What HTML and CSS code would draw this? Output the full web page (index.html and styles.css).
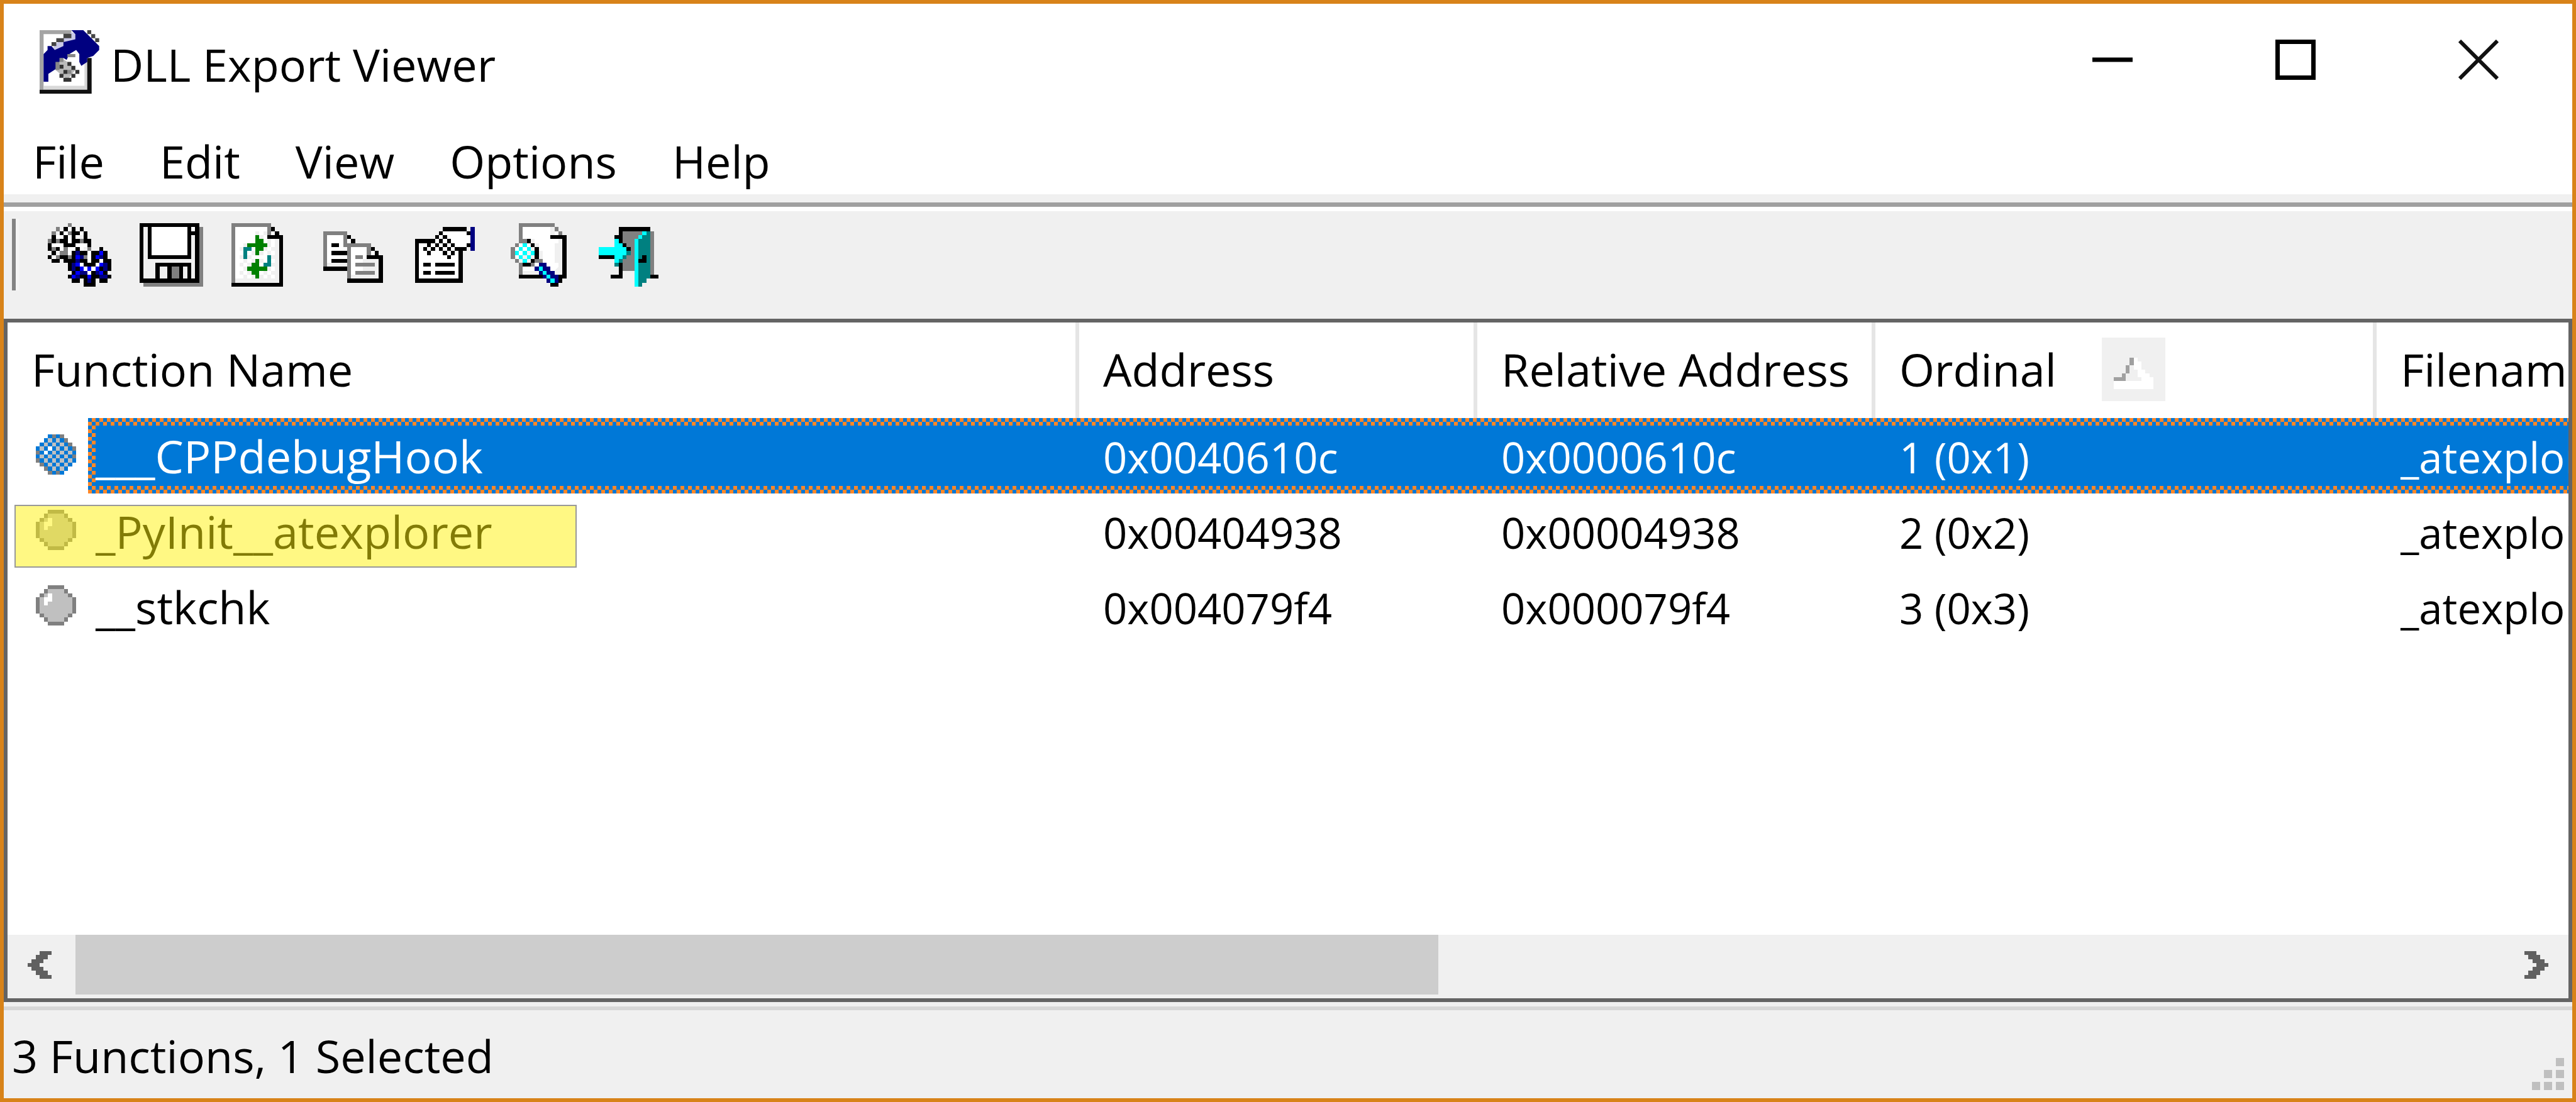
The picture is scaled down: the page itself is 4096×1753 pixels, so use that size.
FILE: index.html
```html
<!DOCTYPE html>
<html lang="en">
<head>
<meta charset="utf-8">
<title>DLL Export Viewer</title>
<link rel="stylesheet" href="styles.css">
</head>
<body>
<div class="window">
  <header class="titlebar">
    <svg class="icon" viewBox="0 0 16 16" aria-hidden="true">
      <path fill="#fff" d="M0 0h13v16H0z"/>
      <path fill="#a4a4a4" d="M0 0h8v1H1V15H0z"/>
      <path fill="#d8d8d8" d="M1 14h11v1H1zM11.300 8h.8v7h-.8z"/>
      <path fill="#111" d="M0 15h13v1H0zM12 7h1.100v9H12z"/>
      <path fill="#c9c9e8" d="M4 3.500l3-2 1-1 2 .5v1.500L5 5 3 5z"/>
      <path fill="#000080" d="M8 0h3l1 1 3 3v1l-1.500 1.500L12 7v1l-1.500 1L10 8V6l-.8-1-1.700 1-.7 1.500L6 7 4.500 8.500v1L2.200 11v2H1V6l1-1V4h1l.8 1L6 4V3l3-.7V1z"/>
      <path fill="#444" d="M3 3h1.200v1H3zM4.200 2h1.900v1H4.200zM6 .9h2V2H6zM12 0h1v1h-1zM13 1h1v1h-1zM14 2h1v1h-1z"/>
      <path fill="#bbb" d="M5.500 7L7 8l2 2-2 2.500L4 10z"/>
      <path fill="#333" d="M5 8.700h1v1H5zM6 10h1v1H6zM5 11h1v1H5zM6 12h2v1H6zM8 11h1v1H8zM9 10h1v1H9zM8 9h1v1H8zM7 8h1v1H7z"/>
      <path fill="#888" d="M5 7h1v1H5zM4 8h1v2H4zM7 10h1v1H7zM7 6h2v.8H7z"/>
    </svg>
    <h1 class="title">DLL Export Viewer</h1>
    <div class="window-controls">
      <button class="control" type="button" aria-label="Minimize"><svg viewBox="0 0 64 64"><path d="M0 32h64" stroke="#000" stroke-width="7"/></svg></button>
      <button class="control" type="button" aria-label="Maximize"><svg viewBox="0 0 64 64"><path d="M3.500 3.500h57v57h-57z" fill="none" stroke="#000" stroke-width="7"/></svg></button>
      <button class="control" type="button" aria-label="Close"><svg viewBox="0 0 64 64"><path d="M2 2l60 60M62 2L2 62" fill="none" stroke="#111" stroke-width="6"/></svg></button>
    </div>
  </header>

  <nav class="menubar" aria-label="Menu">
    <button type="button">File</button>
    <button type="button">Edit</button>
    <button type="button">View</button>
    <button type="button">Options</button>
    <button type="button">Help</button>
  </nav>

  <div class="toolbar" role="toolbar" aria-label="Tools">
    <span class="gripper"></span>
    <button type="button" aria-label="Select DLL files">
      <svg class="icon pixel" viewBox="0 0 16 16"><g transform="translate(0 .5)">
        <path stroke="#fff" d="M5 1h1M4 2h1M8 2h1M2 3h2M5 3h1M7 3h1M5 4h1M1 5h3M7 5h3M3 6h1M5 6h2M8 6h1M5 7h1M10 7h1M1 8h1M10 8h1M10 9h1M13 9h1M8 10h1M12 10h1M9 11h1M11 11h1M10 12h1"/>
        <path stroke="#808080" d="M5 0h1M2 1h1M1 2h1M5 2h1M0 4h1M2 4h1M8 4h1M1 6h1M4 6h1M10 6h1M3 7h2M2 8h1M5 8h1M9 8h1"/>
        <path stroke="#000" d="M4 1h1M6 1h1M8 1h1M3 2h1M6 2h2M9 2h1M1 3h1M4 3h1M6 3h1M9 3h1M1 4h1M3 4h2M6 4h2M9 4h2M0 5h1M4 5h3M10 5h1M0 6h1M2 6h1M7 6h1M13 6h1M1 7h1M6 7h1M8 7h2M11 7h2M14 7h1M0 8h1M3 8h2M6 8h1M11 8h1M14 8h1M1 9h2M4 9h3M8 9h2M11 9h2M14 9h2M5 10h1M9 10h3M15 10h1M5 11h1M7 11h1M13 11h1M15 11h1M6 12h1M11 12h1M14 12h1M5 13h1M8 13h2M11 13h2M15 13h1M6 14h2M9 14h1M11 14h1M13 14h2M9 15h3"/>
        <path stroke="#000080" d="M7 7h1M8 8h1M13 8h1M7 9h1M6 10h1M14 10h1M6 11h1M14 11h1M8 12h2M12 12h1M7 13h1M13 13h2M10 14h1"/>
        <path stroke="#00f" d="M13 7h1M7 8h1M12 8h1M7 10h1M13 10h1M8 11h1M10 11h1M12 11h1M7 12h1M13 12h1M6 13h1M10 13h1"/>
      </g></svg>
    </button>
    <button type="button" aria-label="Save">
      <svg class="icon pixel" viewBox="0 0 16 16">
        <path fill="#808080" d="M1 1h15v15H1z"/>
        <path fill="#000" d="M0 0h15v15H0z"/>
        <path fill="#f0f0f0" d="M1 1h1v8h11V3h1v11h-1v-4H4v4H1zM5 11h2v3H5zM11 11h1v3h-1z"/>
        <path fill="#fff" d="M3 1h9v7H3zM13 1h1v1h-1z"/>
        <path fill="#808080" d="M8 11h2v3H8z"/>
      </svg>
    </button>
    <button type="button" aria-label="Refresh">
      <svg class="icon pixel" viewBox="0 0 16 16"><g transform="translate(0 .5)">
        <path fill="#fff" d="M1 .5h8v3h2v10H1z"/>
        <path stroke="#fff" d="M10 2h1"/>
        <path stroke="#f0f0f0" d="M6 2h1M8 2h1M7 3h1M9 4h1M3 5h1M9 5h1M2 6h1M8 6h1M10 6h1M5 7h1M7 7h1M9 7h1M2 8h1M4 8h1M10 8h1M3 9h1M5 9h1M7 9h1M2 10h1M4 10h1M10 10h1M3 11h1M9 11h1M2 12h1M4 12h1M8 12h1M10 12h1M3 13h1M5 13h1M7 13h1M9 13h1"/>
        <path stroke="#808080" d="M0 0h10M0 1h1M9 1h1M0 2h1M9 2h1"/>
        <path fill="#808080" d="M0 2h1v12.500H0z"/>
        <path fill="#000" d="M10 .5h1v1h-1zM11 1.500h1v1h-1zM9 2.500h4v13H0v-1h12v-11H9z"/>
        <path stroke="green" d="M6 3h1M6 4h2M4 5h5M6 6h2M6 7h1M6 9h1M5 10h2M4 11h5M5 12h2M6 13h1"/>
        <path stroke="teal" d="M3 6h2M3 7h1M3 8h1M9 8h1M9 9h1M8 10h2"/>
      </g></svg>
    </button>
    <button type="button" aria-label="Copy">
      <svg class="icon pixel" viewBox="0 0 16 16">
        <path fill="#fff" d="M1 3h4v3h1v4H1zM6 4h1v1H6zM7 6h4v3h-1v4H7zM12 7h1v1h-1z"/>
        <path fill="#808080" d="M0 2h6v3h6v3h-1V6H7v8H6V6H5V3H1v8H0zM8 8h2v1H8zM8 10h5v1H8zM8 12h5v1H8z"/>
        <path fill="#000" d="M6 3h1v1H6zM7 4h1v1H7zM0 11h6v1H0zM2 5h2v1H2zM2 7h4v1H2zM2 9h4v1H2zM12 6h1v1h-1zM13 7h1v1h-1zM11 8h4v7H6v-1h8V9h-3z"/>
      </svg>
    </button>
    <button type="button" aria-label="Properties">
      <svg class="icon pixel" viewBox="0 0 16 16"><g transform="translate(0 .5)">
        <path fill="#fff" d="M1 4.500h4v-2h2v-1h7v4h-3v8H1z"/>
        <path fill="#000" d="M0 3.500h5v1H1v9h10v-8h1v9H0z"/>
        <path stroke="#000" d="M7 1h6M6 2h1M13 2h1M5 3h1M7 3h1M6 4h1M8 4h1M3 5h1M5 5h1M7 5h1M9 5h1M13 5h1M2 6h1M4 6h1M6 6h1M8 6h1M10 6h3M3 7h1M7 7h1M9 7h1M8 8h1M2 10h2M5 10h5M2 12h2M5 12h5"/>
        <path fill="#000080" d="M14 .5h1v6h-1z"/>
      </g></svg>
    </button>
    <button type="button" aria-label="Find">
      <svg class="icon pixel" viewBox="-1 0 16 16"><g transform="translate(0 .5)">
        <path fill="#fff" d="M3 .5h7v3h2v7l-1 1h-8zM2 4.500h3l1 2v2l-1 1H2l-1-2v-2zM11 1.500h1v1h-1z"/>
        <path fill="#f0f0f0" d="M10 .5h1v2h-1zM11 4.500h1v5h-1zM5 3.500h1v1h1v2h1v2H7v-3H6v-1H5z"/>
        <path stroke="#f0f0f0" d="M4 7h1M3 8h1M5 8h1M4 9h1M2 9h1M5 6h1"/>
        <path stroke="#808080" d="M2 0h9M2 1h1M11 1h1M2 2h1M12 2h1M2 3h1M2 4h2M1 5h1M0 6h1M0 7h1M0 8h1M1 9h1M6 9h2M2 10h1M5 10h1M2 11h1M2 12h1"/>
        <path fill="#000" d="M10 2.500h4v11H2v-1h11v-9h-3z"/>
        <path stroke="#000" d="M4 4h1M5 5h1M6 6h1M6 7h1M6 8h1M5 9h1M3 10h2M12 14h1M10 15h2"/>
        <path stroke="#0ff" d="M3 5h1M2 6h1M4 6h1M1 7h1M3 7h1M5 7h1M2 8h1M4 8h1M3 9h1"/>
        <path stroke="#000080" d="M7 10h2M6 11h4M7 12h4M8 13h4M9 14h3"/>
        <path stroke="#0ff" d="M7 11h1M8 12h1M9 13h1M10 14h1"/>
      </g></svg>
    </button>
    <button type="button" aria-label="Exit">
      <svg class="icon pixel" viewBox="0 0 16 16"><g transform="translate(0 .5)">
        <path fill="#808080" d="M6 1.500h8v11h-1v-11zM6 1.500h6v2l-3 1v7H6z"/>
        <path fill="#000" d="M5 .5h8v1H6v3H5z"/>
        <path stroke="#000" d="M4 3h1M6 5h1M7 6h1M0 8h4M5 10h1M5 11h1M5 12h1M3 13h3M13 13h2"/>
        <path stroke="#0ff" d="M4 4h1M4 5h2M0 6h7M0 7h7M4 8h2M4 9h1M11 2h1M10 3h1"/>
        <path stroke="teal" d="M7 7h1M6 8h1M5 9h1M4 10h1M12 2h1M11 3h2M10 14h2M10 15h1"/>
        <path fill="#0ff" d="M9 3.500h1v12H9z"/>
        <path fill="teal" d="M10 3.500h3v10h-3z"/>
        <path stroke="#000" d="M11 8h1M10 9h2"/>
      </g></svg>
    </button>
  </div>

  <main class="list">
    <div class="list-body">
      <table>
        <colgroup>
          <col class="col-name"><col class="col-address"><col class="col-relative"><col class="col-ordinal"><col class="col-file">
        </colgroup>
        <thead>
          <tr>
            <th scope="col">Function Name</th>
            <th scope="col">Address</th>
            <th scope="col">Relative Address</th>
            <th scope="col" aria-sort="ascending">
              <div class="sorted">Ordinal
                <svg class="icon pixel" viewBox="0 0 16 16" aria-hidden="true">
                  <path fill="#f0f0f0" d="M0 0h16v16H0z"/>
                  <path fill="#a0a0a0" d="M7 5h1v2H7zM6 7h1v2H6zM5 9h1v2H5zM3 10h2v1H3z"/>
                  <path fill="#fff" d="M8 5h1v3H8zM9 6h1v4H9zM10 8h1v3h-1zM11 9h1v2h-1zM12 10h1v1h-1zM3 11h10v2H3z"/>
                </svg>
              </div>
            </th>
            <th scope="col">Filename</th>
          </tr>
        </thead>
        <tbody>
          <tr class="selected">
            <td class="name"><div class="item">
              <span class="mark"><svg class="bullet pixel" viewBox="0 0 10 10" aria-hidden="true">
                <path fill="#c0c0c0" d="M3 0h4v1h1v1h1v1h1v4H9v1H8v1H7v1H3V9H2V8H1V7H0V3h1V2h1V1h1z"/>
                <path fill="#fff" d="M3 2h1v2H3zM2 3h1v2H2z"/>
                <g transform="translate(0 .5)">
                  <path stroke="#808080" d="M3 0h4M2 1h1M7 1h1M1 2h1M8 2h1M0 3h1M9 3h1M0 4h1M9 4h1M0 5h1M9 5h1M0 6h1M9 6h1M1 7h1M8 7h1M2 8h1M7 8h1M3 9h4"/>
                  <path stroke="#0078d7" d="M3 0h1M5 0h1M2 1h1M4 1h1M6 1h1M1 2h1M3 2h1M5 2h1M7 2h1M0 3h1M2 3h1M4 3h1M6 3h1M8 3h1M1 4h1M3 4h1M5 4h1M7 4h1M9 4h1M0 5h1M2 5h1M4 5h1M6 5h1M8 5h1M1 6h1M3 6h1M5 6h1M7 6h1M9 6h1M2 7h1M4 7h1M6 7h1M8 7h1M3 8h1M5 8h1M7 8h1M4 9h1M6 9h1"/>
                </g>
              </svg></span>
              <span class="label">___CPPdebugHook</span>
            </div></td>
            <td>0x0040610c</td>
            <td>0x0000610c</td>
            <td>1 (0x1)</td>
            <td>_atexplorer.pyd</td>
          </tr>
          <tr>
            <td class="name"><div class="item">
              <span class="mark"><svg class="bullet pixel" viewBox="0 0 10 10" aria-hidden="true">
                <path fill="#c0c0c0" d="M3 0h4v1h1v1h1v1h1v4H9v1H8v1H7v1H3V9H2V8H1V7H0V3h1V2h1V1h1z"/>
                <path fill="#fff" d="M3 2h1v2H3zM2 3h1v2H2z"/>
                <path stroke="#808080" transform="translate(0 .5)" d="M3 0h4M2 1h1M7 1h1M1 2h1M8 2h1M0 3h1M9 3h1M0 4h1M9 4h1M0 5h1M9 5h1M0 6h1M9 6h1M1 7h1M8 7h1M2 8h1M7 8h1M3 9h4"/>
              </svg></span>
              <span class="label">_PyInit__atexplorer</span>
              <span class="highlight"></span>
            </div></td>
            <td>0x00404938</td>
            <td>0x00004938</td>
            <td>2 (0x2)</td>
            <td>_atexplorer.pyd</td>
          </tr>
          <tr>
            <td class="name"><div class="item">
              <span class="mark"><svg class="bullet pixel" viewBox="0 0 10 10" aria-hidden="true">
                <path fill="#c0c0c0" d="M3 0h4v1h1v1h1v1h1v4H9v1H8v1H7v1H3V9H2V8H1V7H0V3h1V2h1V1h1z"/>
                <path fill="#fff" d="M3 2h1v2H3zM2 3h1v2H2z"/>
                <path stroke="#808080" transform="translate(0 .5)" d="M3 0h4M2 1h1M7 1h1M1 2h1M8 2h1M0 3h1M9 3h1M0 4h1M9 4h1M0 5h1M9 5h1M0 6h1M9 6h1M1 7h1M8 7h1M2 8h1M7 8h1M3 9h4"/>
              </svg></span>
              <span class="label">__stkchk</span>
            </div></td>
            <td>0x004079f4</td>
            <td>0x000079f4</td>
            <td>3 (0x3)</td>
            <td>_atexplorer.pyd</td>
          </tr>
        </tbody>
      </table>
    </div>
    <div class="scrollbar">
      <button class="scroll-left" type="button" aria-label="Scroll left"><svg class="arrow pixel" viewBox="0 0 6 7"><path fill="#606060" d="M3 0h3v1H5v1H4v1H3v1h1v1h1v1h1v1H3V6H2V5H1V4H0V3h1V2h1V1h1z"/></svg></button>
      <div class="track"><div class="thumb"></div></div>
      <button class="scroll-right" type="button" aria-label="Scroll right"><svg class="arrow pixel" viewBox="0 0 6 7"><path fill="#606060" d="M0 0h3v1h1v1h1v1h1v1H5v1H4v1H3v1H0V6h1V5h1V4h1V3H2V2H1V1H0z"/></svg></button>
    </div>
  </main>

  <footer class="statusbar">
    <span class="status">3 Functions, 1 Selected</span>
    <svg class="grip pixel" viewBox="0 0 8 8" aria-hidden="true"><path fill="#bfbfbf" d="M6 0h2v2H6zM3 3h2v2H3zM6 3h2v2H6zM0 6h2v2H0zM3 6h2v2H3zM6 6h2v2H6z"/></svg>
  </footer>
</div>
</body>
</html>
```
FILE: styles.css
```css
* {
  box-sizing: border-box;
}

body {
  margin: 0;
  font-family: "Open Sans", "Noto Sans", sans-serif;
  font-size: 72px;
  color: #000;
  --face: #f0f0f0;
  --blue: #0078d7;
  --checker: repeating-conic-gradient(#ff8728 0 25%, #0078d7 0 50%);
}

button {
  padding: 0;
  border: 0;
  background: none;
  font: inherit;
  color: inherit;
}

svg {
  display: block;
  flex: none;
}

.icon {
  width: 101px;
  height: 101px;
}

.pixel {
  shape-rendering: crispEdges;
}

.window {
  display: flex;
  flex-direction: column;
  min-height: 100vh;
  border: 6px solid #d88319;
  background: #fff;
  overflow: hidden;
}

/* Title bar */
.titlebar {
  display: flex;
  align-items: center;
  height: 184px;
  padding: 0 4px 0 57px;
}

.title {
  flex: 1;
  margin: 0;
  padding: 8px 0 0 12px;
  font-size: 72px;
  font-weight: 400;
  line-height: 100px;
}

.window-controls {
  display: flex;
  height: 178px;
  align-self: flex-start;
}

.control {
  display: grid;
  place-items: center;
  width: 291px;
}

.control svg {
  width: 64px;
  height: 64px;
}

/* Menu */
.menubar {
  display: flex;
  gap: 88px;
  padding: 14px 0 0 46px;
  line-height: 105px;
}

/* Toolbar */
.toolbar {
  display: flex;
  align-items: center;
  gap: 45px;
  padding: 39px 0 45px 13px;
  background:
    linear-gradient(var(--face) 13px, #a0a0a0 13px 20px, #fff 20px 27px, var(--face) 27px);
}

.gripper {
  width: 12px;
  height: 114px;
  border-left: 6px solid #848484;
  background: #f5f5f5;
}

/* List view */
.list {
  display: flex;
  flex: 1;
  flex-direction: column;
  border: 6px solid #646464;
}

.list-body {
  flex: 1;
  overflow: hidden;
}

table {
  width: 5200px;
  table-layout: fixed;
  border-spacing: 0;
}

.col-name { width: 1704px; }
.col-address { width: 633px; }
.col-relative { width: 633px; }
.col-ordinal { width: 797px; }

th {
  height: 152px;
  padding: 0 0 4px 38px;
  border-right: 6px solid #e5e5e5;
  font-weight: 400;
  line-height: 100px;
  text-align: left;
  white-space: nowrap;
}

.sorted {
  display: flex;
  align-items: center;
  gap: 72px;
}

td {
  height: 120px;
  padding: 4px 0 0 38px;
  font-size: 67px;
  line-height: 116px;
  vertical-align: top;
  white-space: nowrap;
}

.name {
  padding: 0;
  font-size: 72px;
  line-height: 120px;
}

.item {
  position: relative;
  display: flex;
}

.mark {
  width: 128px;
  padding: 26px 0 0 45px;
}

.bullet {
  width: 64px;
  height: 64px;
}

.label {
  flex: 1;
  padding-left: 12px;
}

.selected {
  color: #fff;
  background:
    var(--checker) 8px 0 / 12px 12px repeat-x,
    var(--checker) 8px 100% / 12px 12px repeat-x,
    var(--blue);
}

.selected .mark {
  background: #fff;
}

.selected .label {
  background: var(--checker) 0 0 / 12px 12px repeat-y;
}

.highlight {
  position: absolute;
  top: 18px;
  left: 11px;
  width: 894px;
  height: 100px;
  border: 2px solid #999;
  background: rgba(255, 241, 12, 0.51);
  background-clip: padding-box;
}

/* Scroll bar */
.scrollbar {
  display: flex;
  height: 101px;
  padding-bottom: 6px;
  background: var(--face);
}

.scroll-left,
.scroll-right {
  display: flex;
  align-items: center;
  width: 108px;
  padding: 0 32px;
}

.scroll-right {
  justify-content: flex-end;
}

.arrow {
  width: 38px;
  height: 44px;
}

.track {
  flex: 1;
}

.thumb {
  width: 56.2%;
  height: 100%;
  background: #cdcdcd;
}

/* Status bar */
.statusbar {
  display: flex;
  justify-content: space-between;
  align-items: flex-end;
  padding: 30px 13px 13px 13px;
  background: linear-gradient(var(--face) 7px, #d7d7d7 7px 13px, var(--face) 13px);
}

.status {
  line-height: 110px;
}

.grip {
  width: 51px;
  height: 51px;
}
```
